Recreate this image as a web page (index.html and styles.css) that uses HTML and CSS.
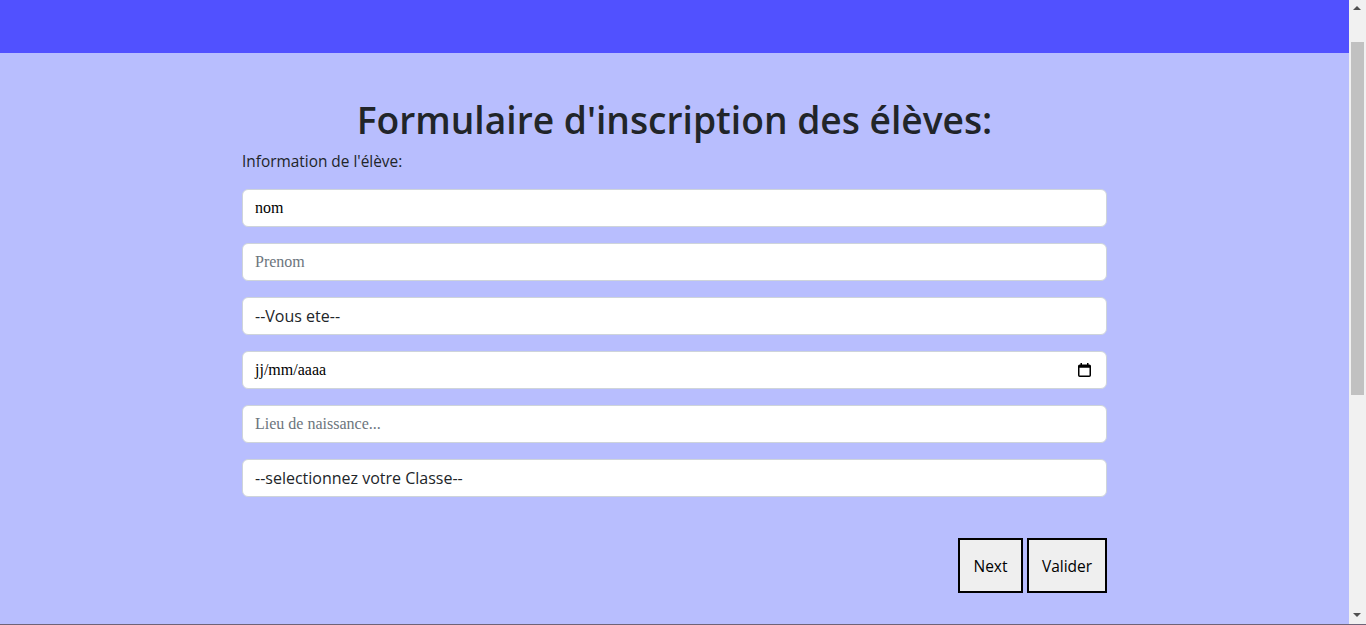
FILE: index.html
```html
<!DOCTYPE html>
<html lang="fr">
<head>
<meta charset="utf-8">
<title>Inscription</title>
<link rel="stylesheet" href="styles.css">
</head>
<body>
<nav class="topbar"></nav>
<main class="page">
  <form class="form">
    <h1 class="title">Formulaire d'inscription des élèves:</h1>
    <p class="section-label">Information de l'élève:</p>
    <div class="fields">
      <input class="field field-serif" type="text" value="nom">
      <input class="field field-serif" type="text" placeholder="Prenom">
      <select class="field field-sans"><option>--Vous ete--</option></select>
      <div class="field field-serif field-date">
        <span>jj/mm/aaaa</span>
        <svg class="cal" width="13" height="14" viewBox="0 0 13 14" aria-hidden="true">
          <rect x="2.5" y="0" width="1.5" height="3" fill="#000"/>
          <rect x="9" y="0" width="1.5" height="3" fill="#000"/>
          <rect x="0.75" y="2.25" width="11.5" height="11" rx="1" fill="none" stroke="#000" stroke-width="1.5"/>
          <rect x="0.75" y="2.25" width="11.5" height="2.5" fill="#000"/>
        </svg>
      </div>
      <input class="field field-serif" type="text" placeholder="Lieu de naissance...">
      <select class="field field-sans"><option>--selectionnez votre Classe--</option></select>
    </div>
    <div class="actions">
      <button type="button" class="btn btn-next">Next</button>
      <button type="button" class="btn btn-valider">Valider</button>
    </div>
  </form>
</main>
<div class="scrollbar" aria-hidden="true">
  <span class="arrow arrow-up"></span>
  <span class="thumb"></span>
  <span class="arrow arrow-down"></span>
</div>
<div class="window-edge" aria-hidden="true"></div>
</body>
</html>
```
FILE: styles.css
```css
html, body {
  margin: 0;
  padding: 0;
}
body {
  margin-right: 17px;
  background: #b8befe;
  font-family: "Open Sans", "Noto Sans", sans-serif;
  color: #212529;
  min-height: 1040px;
}
html {
  background: #b8befe;
}
.topbar {
  height: 53px;
  background: #5151ff;
}
.page {
  padding-top: 43px;
}
.form {
  width: 865px;
  margin: 0 auto;
}
.title {
  margin: 0;
  text-align: center;
  font-size: 37.2px;
  font-weight: 600;
  line-height: 48px;
  color: #212529;
}
.section-label {
  margin: 6px 0 0;
  font-size: 15.4px;
  line-height: 24px;
  color: #212529;
}
.fields {
  margin-top: 15px;
  display: flex;
  flex-direction: column;
  gap: 16px;
}
.field {
  box-sizing: border-box;
  height: 38px;
  width: 100%;
  margin: 0;
  padding: 0 12px;
  background: #fff;
  border: 1px solid #ced4da;
  border-radius: 6px;
  font-size: 16px;
  color: #000;
  outline: none;
}
.field-serif {
  font-family: "Liberation Serif", serif;
}
.field-serif::placeholder {
  color: #6c757d;
}
.field-sans {
  font-family: "Open Sans", "Noto Sans", sans-serif;
  color: #212529;
  appearance: none;
  -webkit-appearance: none;
}
.field-date {
  display: flex;
  align-items: center;
  justify-content: space-between;
  padding-right: 15px;
}
.cal {
  display: block;
}
.actions {
  margin-top: 41px;
  display: flex;
  justify-content: flex-end;
  gap: 4px;
}
.btn {
  box-sizing: border-box;
  height: 55px;
  padding: 0;
  background: #efefef;
  border: 2px solid #000;
  border-radius: 0;
  font-family: "Open Sans", "Noto Sans", sans-serif;
  font-size: 15.5px;
  color: #000;
}
.btn-next { width: 65px; }
.btn-valider { width: 80px; }

/* simulated window scrollbar */
.scrollbar {
  position: fixed;
  top: 0;
  right: 0;
  width: 17px;
  height: 100vh;
  background: #f1f1f1;
}
.thumb {
  position: absolute;
  top: 42px;
  left: 2px;
  width: 13px;
  height: 353px;
  background: #c1c1c1;
}
.arrow {
  position: absolute;
  left: 4px;
  width: 0;
  height: 0;
  border-left: 4px solid transparent;
  border-right: 4px solid transparent;
}
.arrow-up {
  top: 6px;
  border-bottom: 4px solid #505050;
}
.arrow-down {
  bottom: 8px;
  border-top: 4px solid #505050;
}
.window-edge {
  position: fixed;
  left: 0;
  right: 0;
  bottom: 0;
  height: 1px;
  background: #6e6478;
}
```
